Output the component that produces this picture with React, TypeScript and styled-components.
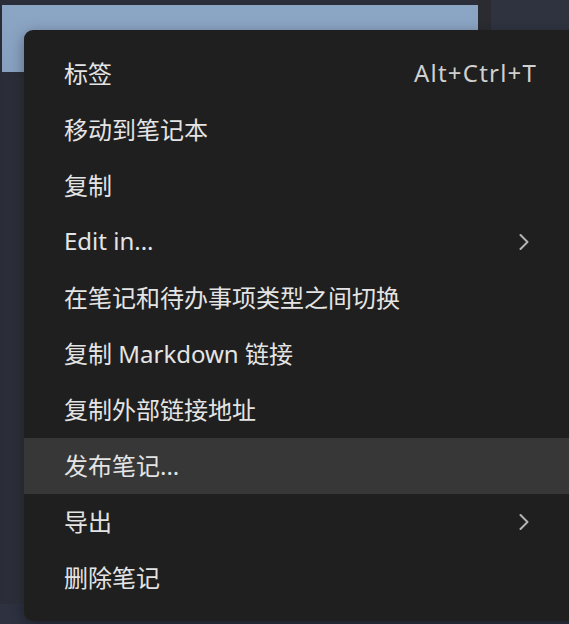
import styled, { createGlobalStyle } from "styled-components";

const GlobalStyle = createGlobalStyle`
  html, body {
    margin: 0;
    padding: 0;
    width: 569px;
    height: 624px;
    overflow: hidden;
    background: #2c2f3a;
  }
  #root {
    height: 624px;
  }
`;

const Page = styled.div`
  position: relative;
  height: 624px;
  display: flex;
  flex-direction: column;
  background: linear-gradient(90deg, #2a2d37 0px, #2d303b 24px, #2c2f3a 100%);
`;

const TopRow = styled.div`
  display: flex;
  height: 72px;
  padding-top: 5px;
  background: #2b2e38;
`;

const Gutter = styled.div`
  width: 2px;
  background: #292c35;
`;

const Selection = styled.div`
  width: 476px;
  height: 67px;
  background: linear-gradient(180deg, #8ba5c4 0%, #87a0bf 100%);
`;

const Divider = styled.div`
  width: 13px;
  margin-top: -5px;
  background: #2a2c32;
`;

const Pane = styled.div`
  flex: 1;
  margin-top: -5px;
  background: #2f3340;
`;

const Status = styled.div`
  margin-top: auto;
  height: 20px;
  display: flex;
  justify-content: flex-end;
  padding-right: 4px;
  font-family: "Noto Sans", sans-serif;
  font-size: 13px;
  line-height: 20px;
  color: #c8ccd6;
  background: #2d3140;
`;

const Menu = styled.ul`
  position: absolute;
  top: 30px;
  left: 24px;
  width: 560px;
  margin: 0;
  padding: 16px 0 15px;
  list-style: none;
  background: #1f1f1f;
  border-radius: 9px;
  box-shadow: 0 4px 14px rgba(0, 0, 0, 0.35);
`;

const Item = styled.li<{ $active?: boolean }>`
  height: 56px;
  box-sizing: border-box;
  display: flex;
  align-items: center;
  padding: 0 48px 3px 40px;
  background: ${(p) => (p.$active ? "#373737" : "transparent")};
  font-family: "Noto Sans", "Noto Sans CJK SC", sans-serif;
  font-size: 24px;
  color: #e4e4e4;
`;

const Label = styled.span`
  flex: 1;
  white-space: nowrap;
`;

const Shortcut = styled.span`
  color: #d0d0d0;
  letter-spacing: 1.2px;
  margin-right: -1px;
`;

const Chevron = () => (
  <svg width="16" height="16" viewBox="0 0 16 16" style={{ marginRight: 1, marginTop: 3 }}>
    <path
      d="M1.5 1 L8.5 8 L1.5 15"
      fill="none"
      stroke="#b4b4b4"
      strokeWidth="2"
      strokeLinecap="round"
      strokeLinejoin="round"
    />
  </svg>
);

const items = [
  { label: "标签", shortcut: "Alt+Ctrl+T" },
  { label: "移动到笔记本" },
  { label: "复制" },
  { label: "Edit in...", sub: true },
  { label: "在笔记和待办事项类型之间切换" },
  { label: "复制 Markdown 链接" },
  { label: "复制外部链接地址" },
  { label: "发布笔记...", active: true },
  { label: "导出", sub: true },
  { label: "删除笔记" },
];

export default function App() {
  return (
    <>
      <GlobalStyle />
      <Page>
        <TopRow>
          <Gutter />
          <Selection />
          <Divider />
          <Pane />
        </TopRow>
        <Status>ull 00</Status>
        <Menu>
          {items.map((it) => (
            <Item key={it.label} $active={it.active}>
              <Label>{it.label}</Label>
              {it.shortcut && <Shortcut>{it.shortcut}</Shortcut>}
              {it.sub && <Chevron />}
            </Item>
          ))}
        </Menu>
      </Page>
    </>
  );
}
